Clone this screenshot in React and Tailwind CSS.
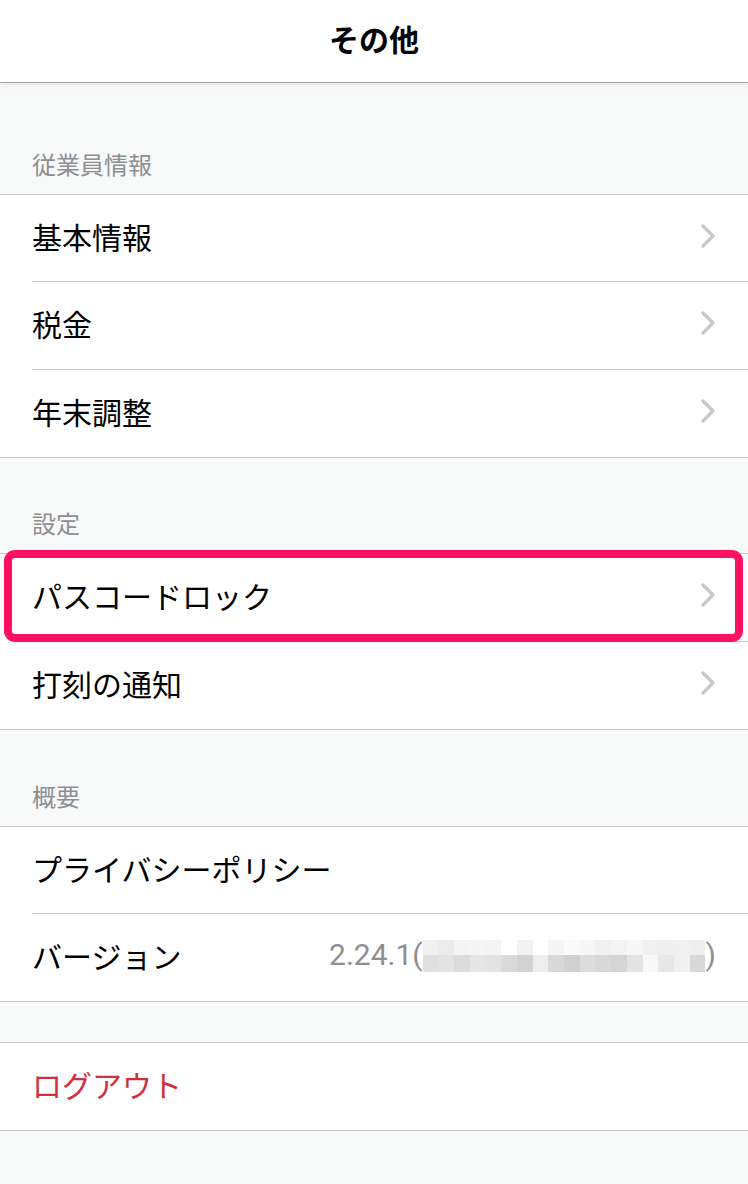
import React from "react";

const FONT = { fontFamily: '"Noto Sans CJK JP", "Noto Sans", sans-serif' };

function Chevron() {
  return (
    <svg width="16" height="24" viewBox="0 0 16 24" className="shrink-0">
      <polyline points="3,2 13,12 3,22" fill="none" stroke="#c7c7cc" strokeWidth="3.2" strokeLinecap="round" strokeLinejoin="round" />
    </svg>
  );
}

function Row({ label, chevron = true, last = false, children, highlight = false, red = false, short = false }) {
  return (
    <div className="relative bg-white">
      <div className={`flex items-center ${short ? "h-[86px]" : "h-[87px]"} pl-8 pr-8 pb-[5px]`}>
        <span className={`text-[30px] leading-none ${red ? "text-[#d0313d]" : "text-black"}`}>{label}</span>
        <div className="flex-1" />
        {children}
        {chevron && <Chevron />}
      </div>
      {!last && <div className="ml-8 h-px bg-[#c8c7cc]" />}
      {highlight && (
        <div className="absolute left-[4px] right-[5px] top-[-4px] bottom-[0px] border-[8px] border-[#ff1060] rounded-[11px] pointer-events-none" />
      )}
    </div>
  );
}

function Group({ children }) {
  return <div className="border-t border-b border-[#c8c7cc] bg-white">{children}</div>;
}

function SectionHeader({ title, h }) {
  return (
    <div className={`flex items-end pl-8 ${h} pb-[18px]`}>
      <span className="text-[24px] leading-none text-[#8e8e93]">{title}</span>
    </div>
  );
}

const top = ["#f0f0f0","#ececec","#f3f3f3","#f5f5f5","#f3f3f3","#ffffff","#f2f2f2","#ffffff","#f5f5f5","#fafafa","#f7f7f7","#f0f0f0","#f3f3f3","#f7f7f7","#f0f0f0","#efefef","#f0f0f0","#eeeeee"];
const bot = ["#e0e0e0","#e3e3e3","#dcdcdc","#e5e5e5","#e3e3e3","#dadada","#d2d2d2","#ededed","#d8d8d8","#d0d0d0","#dcdcdc","#d8d8d8","#d5d5d5","#e3e3e3","#f8f8f8","#e8e8e8","#f0f0f0","#d8d8d8"];

function Mosaic() {
  return (
    <div className="flex flex-col w-[283px] h-[32px] mt-[2px]">
      <div className="flex h-[15px]">
        {top.map((c, i) => (
          <div key={i} className="flex-1" style={{ background: c }} />
        ))}
      </div>
      <div className="flex h-[17px]">
        {bot.map((c, i) => (
          <div key={i} className="flex-1" style={{ background: c }} />
        ))}
      </div>
    </div>
  );
}

export default function App() {
  return (
    <div className="w-[748px] h-[1184px] bg-[#f8f9f9] overflow-hidden" style={FONT}>
      <div className="relative z-10 h-[83px] bg-white border-b border-[#a5a5a5] shadow-[0_2px_6px_rgba(0,0,0,0.08)] flex items-center justify-center">
        <span className="text-[30px] font-bold text-black leading-none -mt-[6px]">その他</span>
      </div>

      <SectionHeader title="従業員情報" h="h-[111px]" />
      <Group>
        <Row label="基本情報" short />
        <Row label="税金" />
        <Row label="年末調整" last />
      </Group>

      <SectionHeader title="設定" h="h-[95px]" />
      <Group>
        <Row label="パスコードロック" highlight />
        <Row label="打刻の通知" last />
      </Group>

      <SectionHeader title="概要" h="h-[96px]" />
      <Group>
        <Row label="プライバシーポリシー" chevron={false} short />
        <Row label="バージョン" chevron={false} last>
          <div className="flex items-center text-[30px] leading-none text-[#8e8e93]" style={{ fontFamily: '"Roboto", "Noto Sans", sans-serif' }}>
            <span>2.24.1(</span>
            <Mosaic />
            <span>)</span>
          </div>
        </Row>
      </Group>

      <div className="h-[40px]" />
      <Group>
        <Row label="ログアウト" chevron={false} red last />
      </Group>
    </div>
  );
}
